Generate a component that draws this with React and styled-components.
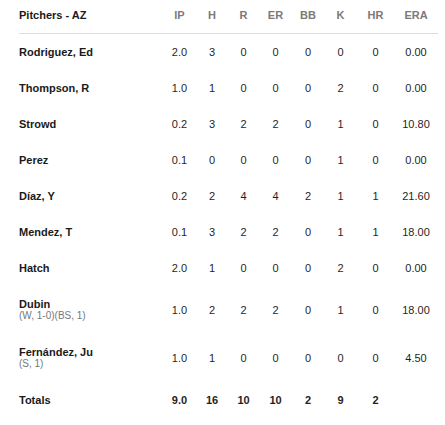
import React from 'react';
import styled, { createGlobalStyle } from 'styled-components';

const GlobalStyle = createGlobalStyle`
  body {
    margin: 0;
    background: #ffffff;
    font-family: "Liberation Sans", Arial, sans-serif;
  }
`;

const cols = '1fr 33px 32px 31px 33px 32px 33px 37px 44px';

const Table = styled.div`
  padding: 0 7px 0 19px;
  width: 445px;
  box-sizing: border-box;
`;

const HeaderRow = styled.div`
  display: grid;
  grid-template-columns: ${cols};
  align-items: center;
  padding: 9px 0 12px;
  line-height: 12px;
  border-bottom: 1px solid #dcdcdc;
`;

const Row = styled.div`
  display: grid;
  grid-template-columns: ${cols};
  align-items: center;
  padding: 12px 0;
  min-height: 12px;
`;

const Title = styled.div`
  font-size: 11px;
  font-weight: bold;
  color: #1a1a1a;
`;

const HeadCell = styled.div`
  text-align: center;
  font-size: 11px;
  font-weight: 600;
  color: #7a7a7a;
`;

const NameCell = styled.div`
  display: flex;
  flex-direction: column;
`;

const Name = styled.div`
  font-size: 11px;
  font-weight: bold;
  line-height: 12px;
  color: #1a1a1a;
`;

const Note = styled.div`
  font-size: 10px;
  line-height: 12px;
  color: #777777;
`;

const Cell = styled.div`
  text-align: center;
  font-size: 11px;
  line-height: 12px;
  color: #1f1f1f;
  font-weight: ${p => (p.$bold ? 'bold' : 'normal')};
`;

const heads = ['IP', 'H', 'R', 'ER', 'BB', 'K', 'HR', 'ERA'];

const pitchers = [
  { name: 'Rodriguez, Ed', stats: ['2.0', '3', '0', '0', '0', '0', '0', '0.00'] },
  { name: 'Thompson, R', stats: ['1.0', '1', '0', '0', '0', '2', '0', '0.00'] },
  { name: 'Strowd', stats: ['0.2', '3', '2', '2', '0', '1', '0', '10.80'] },
  { name: 'Perez', stats: ['0.1', '0', '0', '0', '0', '1', '0', '0.00'] },
  { name: 'Díaz, Y', stats: ['0.2', '2', '4', '4', '2', '1', '1', '21.60'] },
  { name: 'Mendez, T', stats: ['0.1', '3', '2', '2', '0', '1', '1', '18.00'] },
  { name: 'Hatch', stats: ['2.0', '1', '0', '0', '0', '2', '0', '0.00'] },
  { name: 'Dubin', note: '(W, 1-0)(BS, 1)', stats: ['1.0', '2', '2', '2', '0', '1', '0', '18.00'] },
  { name: 'Fernández, Ju', note: '(S, 1)', stats: ['1.0', '1', '0', '0', '0', '0', '0', '4.50'] },
];

const totals = ['9.0', '16', '10', '10', '2', '9', '2', ''];

export default function App() {
  return (
    <>
      <GlobalStyle />
      <Table>
        <HeaderRow>
          <Title>Pitchers - AZ</Title>
          {heads.map(h => (
            <HeadCell key={h}>{h}</HeadCell>
          ))}
        </HeaderRow>
        {pitchers.map(p => (
          <Row key={p.name}>
            <NameCell>
              <Name>{p.name}</Name>
              {p.note && <Note>{p.note}</Note>}
            </NameCell>
            {p.stats.map((s, i) => (
              <Cell key={i}>{s}</Cell>
            ))}
          </Row>
        ))}
        <Row>
          <NameCell>
            <Name>Totals</Name>
          </NameCell>
          {totals.map((s, i) => (
            <Cell key={i} $bold>{s}</Cell>
          ))}
        </Row>
      </Table>
    </>
  );
}
